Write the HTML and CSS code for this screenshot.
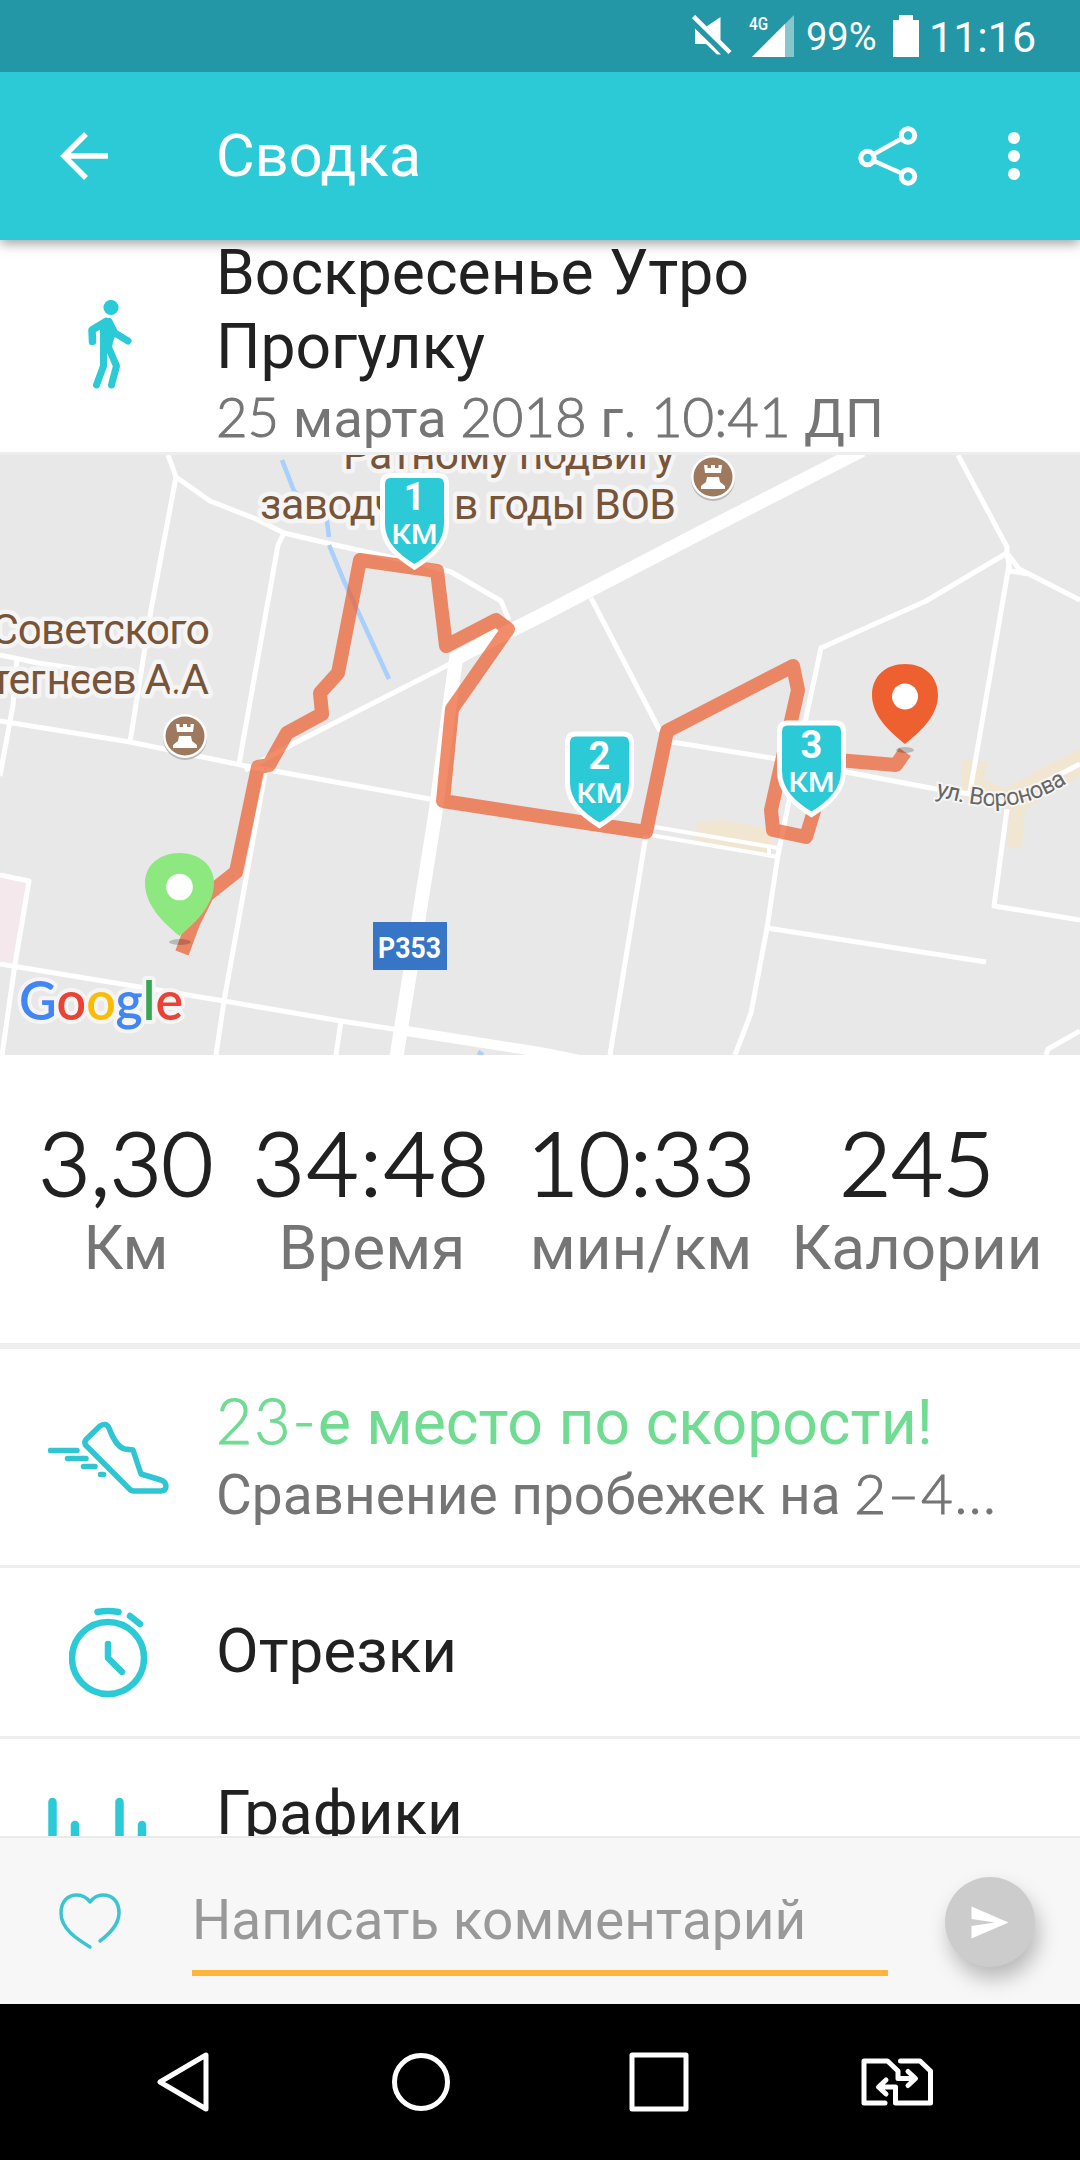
FILE: index.html
```html
<!DOCTYPE html>
<html lang="ru">

<head>
  <meta charset="UTF-8">
  <meta name="viewport" content="width=device-width, initial-scale=1.0">
  <title>Сводка</title>
  <link rel="stylesheet" href="styles.css">
</head>

<body>
  <div class="status-bar">
    <svg class="status-mute" width="40" height="42" viewBox="0 0 40 42">
      <path d="M3 13.500 L21 31 L29 39.500 H25 L14 29 H3 Z M14.500 11.500 L28.500 2 V26 Z" fill="#fff" />
      <path d="M1.500 1.500 L38 37.500" stroke="#fff" stroke-width="4.500" />
    </svg>
    <svg class="status-signal" width="46" height="42" viewBox="0 0 46 42">
      <path d="M45 0 V42 H3 Z" fill="#fff" opacity=".45" />
      <path d="M36 9 V42 H3 Z" fill="#fff" />
      <text x="0" y="15" class="network" textLength="19" lengthAdjust="spacingAndGlyphs">4G</text>
    </svg>
    <span class="status-percent">99%</span>
    <svg class="status-battery" width="26" height="42" viewBox="0 0 26 42">
      <path d="M6 0 H20 V5 H26 V42 H0 V5 H6 Z" fill="#fff" />
    </svg>
    <span class="status-time">11:16</span>
  </div>

  <header class="app-bar">
    <svg class="back" width="50" height="50" viewBox="0 0 50 50" fill="none" stroke="#fff" stroke-width="5.500">
      <path d="M48 25 H5 M26 3 L4 25 L26 47" />
    </svg>
    <h1>Сводка</h1>
    <svg class="share" width="60" height="60" viewBox="0 0 60 60" fill="none" stroke="#fff">
      <path d="M16 28 L43 13 M16 35 L43 47" stroke-width="4.500" />
      <circle cx="9.500" cy="32" r="6.700" stroke-width="5" />
      <circle cx="50" cy="9.500" r="6.700" stroke-width="5" />
      <circle cx="50" cy="50.500" r="6.700" stroke-width="5" />
    </svg>
    <svg class="more" width="12" height="48" viewBox="0 0 12 48" fill="#fff">
      <circle cx="6" cy="6" r="6" />
      <circle cx="6" cy="24" r="6" />
      <circle cx="6" cy="42" r="6" />
    </svg>
  </header>

  <main class="content">
    <section class="activity">
      <div class="icon-cell walker-cell">
        <svg width="48" height="92" viewBox="0 0 48 92" fill="none" stroke="#2ccad7" stroke-linecap="round" stroke-linejoin="round">
          <circle cx="26" cy="7.500" r="7.600" fill="#2ccad7" stroke="none" />
          <path d="M15 22 Q22 15.500 27 20 L31 34 L28 42 L26 54 H15 Z" fill="#2ccad7" stroke="none" />
          <path d="M21 21.500 L7 30 L7.500 41.500" stroke-width="7.500" />
          <path d="M24 21.500 L30 33 L43 41" stroke-width="7" />
          <path d="M18.500 44 V66 L11.500 85 M22 44 L31.500 66 L26.500 85" stroke-width="7" />
        </svg>
      </div>
      <div class="activity-text">
        <h2>Воскресенье Утро<br>Прогулку</h2>
        <p class="date"><span class="num">25</span> марта <span class="num">2018</span> г. <span class="num">10:41</span> ДП</p>
      </div>
    </section>

    <svg class="map" width="1080" height="600" viewBox="0 0 1080 600">
      <rect width="1080" height="600" fill="#e8e8e8" />
      <path d="M0 420 L28 426 L15 509 L0 506 Z" fill="#f4e8ec" />
      <path d="M697 367 L722 365 L771 374 V402 L695 388 Z" fill="#f0e6d2" />
      <path d="M961 304 L987 307 L984 325 L1005 333 L1080 293 V321 L1025 355 L1022 393 L1007 392 L1010 353 L962 343 Z" fill="#f0e6d2" />

      <!-- streets -->
      <g fill="none" stroke="#fff" stroke-width="5" stroke-linejoin="round">
        <path d="M168 0 L176 22 L210 46 L256 64 L284 78 L331 89 L389 102 L430 111 L451 117 L501 146 L509 165" />
        <path d="M176 22 L151 155 L130 287" />
        <path d="M284 78 L278 90 L239 309" />
        <path d="M0 266 L130 287 L241 310 L430 344" />
        <path d="M245 315 L293 289 L454 207" />
        <path d="M265 318 L224 546 L216 600" />
        <path d="M0 200 L38 208 L140 223 M17 203 L13 250 L0 321" />
        <path d="M0 509 L224 546 L341 566 L406 576 M0 420 L29 426 L15 509 L2 600" />
        <path d="M341 566 L336 600" />
        <path d="M958 0 L1007 92 V98 L1019 114 L1029 119 L1080 145 M1007 98 L1010 116 L1029 119" />
        <path d="M1007 98 L926 146 L821 193 L807 258 L778 400 L767 473 L751 558 L735 600" />
        <path d="M1010 104 L970 337" />
        <path d="M591 143 L660 276" />
        <path d="M672 287 L778 304 L846 317 L936 334 L970 339 L1004 348 L1080 309" />
        <path d="M1007 354 L994 451 L1080 465" />
        <path d="M767 473 L986 507" />
        <path d="M646 380 L610 600" />
        <path d="M655 372 L778 393 M650 380 L778 402 M769 392 V400" stroke-width="4" />
        <path d="M1046 600 L1048 594 L1080 576" />
        <path d="M400 575 L540 597 L580 605" stroke-width="10" />
        <path d="M862 -5 L696 80 L540 161 L452 205" stroke-width="14" />
        <path d="M500 178 L456 204 L448 262 L435 361 L396 605" stroke-width="14" />
      </g>
      <path d="M282 5 L294 36 M294 36 L327 66 L329 82 M329 90 L344 126 L389 224 M478 597 L483 600" fill="none" stroke="#a9cffc" stroke-width="4.500" />

      <g class="place">
        <text x="343" y="14" textLength="332">Ратному подвигу</text>
        <text x="260" y="64" textLength="416">заводчан в годы ВОВ</text>
        <text x="-9" y="189" textLength="219">Советского</text>
        <text x="-9" y="239" textLength="218">тегнеев А.А</text>
      </g>
      <path id="voronova" d="M935 341 Q965 349 990 351 Q1030 353 1072 325" fill="none" />
      <text class="street"><textPath href="#voronova" textLength="138">ул. Воронова</textPath></text>

      <g transform="translate(185 281)">
        <circle cy="2" r="22" fill="#b9b9b9" />
        <circle r="22" fill="#fff" />
        <circle r="19.500" fill="#9e795d" />
        <path d="M-9 -12 H-5.500 V-9 H-2 V-12 H2 V-9 H5.500 V-12 H9 L8 -4 H-8 Z M-6 0 H6 L7 5 L12 9 V12 H-12 V9 L-7 5 Z" fill="#fff" />
      </g>
      <g transform="translate(713 22)">
        <circle cy="2" r="22" fill="#b9b9b9" />
        <circle r="22" fill="#fff" />
        <circle r="19.500" fill="#9e795d" />
        <path d="M-9 -12 H-5.500 V-9 H-2 V-12 H2 V-9 H5.500 V-12 H9 L8 -4 H-8 Z M-6 0 H6 L7 5 L12 9 V12 H-12 V9 L-7 5 Z" fill="#fff" />
      </g>

      <!-- walked route -->
      <path class="route" d="M182 498 L193 468 L207 440 L236 417 L258 312 L269 310 L287 278 L322 259 L320 238 L338 218 L360 105 L437 116 L446 191 L496 165 L508 174 L452 254 L443 346 L540 361 L646 377 L667 276 L793 211 L798 235 L771 355 L773 375 L806 382 L814 356 L826 304 L896 310 L905 297" />

      <rect x="373" y="467" width="74" height="48" fill="#3776c6" />
      <text class="road-number" x="378" y="503" textLength="63" lengthAdjust="spacingAndGlyphs">P353</text>

      <!-- start and finish -->
      <ellipse cx="180" cy="487" rx="11" ry="3" fill="#000" opacity=".2" />
      <path d="M179.500 481 C168 471 145 453 145 428 C145 410 160 398 179.500 398 C199 398 214 410 214 428 C214 453 191 471 179.500 481 Z" fill="#8ce87f" />
      <circle cx="179.500" cy="432" r="13.300" fill="#fff" />
      <ellipse cx="905" cy="295" rx="9" ry="3" fill="#000" opacity=".2" />
      <path d="M905 289 C894 280 872 263 872 240 C872 221 886 209 905 209 C924 209 938 221 938 240 C938 263 916 280 905 289 Z" fill="#ee6030" />
      <circle cx="905" cy="241.500" r="13" fill="#fff" />

      <!-- kilometre badges -->
      <g class="km" transform="translate(414.500 23)">
        <path d="M-24 -2.500 H24 Q32 -2.500 32 6 V46 C32 65 18 78 0 89 C-18 78 -32 65 -32 46 V6 Q-32 -2.500 -24 -2.500 Z" />
        <text class="km-value" y="32">1</text>
        <text class="km-unit" y="66" x="-23" textLength="46" lengthAdjust="spacingAndGlyphs">КМ</text>
      </g>
      <g class="km" transform="translate(599.500 281.500)">
        <path d="M-24 -2.500 H24 Q32 -2.500 32 6 V46 C32 65 18 78 0 89 C-18 78 -32 65 -32 46 V6 Q-32 -2.500 -24 -2.500 Z" />
        <text class="km-value" y="32">2</text>
        <text class="km-unit" y="66" x="-23" textLength="46" lengthAdjust="spacingAndGlyphs">КМ</text>
      </g>
      <g class="km" transform="translate(811.500 270.500)">
        <path d="M-24 -2.500 H24 Q32 -2.500 32 6 V46 C32 65 18 78 0 89 C-18 78 -32 65 -32 46 V6 Q-32 -2.500 -24 -2.500 Z" />
        <text class="km-value" y="32">3</text>
        <text class="km-unit" y="66" x="-23" textLength="46" lengthAdjust="spacingAndGlyphs">КМ</text>
      </g>

      <text class="google" x="19" y="565" textLength="164" lengthAdjust="spacingAndGlyphs"><tspan fill="#4285f4">G</tspan><tspan fill="#ea4335">o</tspan><tspan fill="#fbbc05">o</tspan><tspan fill="#4285f4">g</tspan><tspan fill="#34a853">l</tspan><tspan fill="#ea4335">e</tspan></text>
    </svg>

    <section class="stats">
      <div class="stat"><span class="stat-value">3,30</span><span class="stat-label">Км</span></div>
      <div class="stat"><span class="stat-value stat-time">34:48</span><span class="stat-label">Время</span></div>
      <div class="stat"><span class="stat-value">10:33</span><span class="stat-label">мин/км</span></div>
      <div class="stat"><span class="stat-value">245</span><span class="stat-label">Калории</span></div>
    </section>

    <section class="row row-rank">
      <div class="icon-cell">
        <svg width="122" height="76" viewBox="0 0 122 76" fill="none" stroke="#2fc6d4" stroke-width="5.500" stroke-linecap="round" stroke-linejoin="round">
          <path d="M37.500 26 Q36 23 38 20.500 L52 7 Q58 3 61 9 C65 20 71 29 77 30 L85 31 L93 55 L113 61 Q118 63 118 67 Q118 72 113 72 H86 Q83 72 81 69.500 Z" />
          <path d="M2.500 31.500 H29 M19.500 39.500 H38 M35.500 47.500 H47 M52.500 55.500 H55.500" />
        </svg>
      </div>
      <div class="row-text">
        <p class="rank"><span class="num">23-</span>е место по скорости!</p>
        <p class="rank-note">Сравнение пробежек на <span class="num">2–4...</span></p>
      </div>
    </section>

    <section class="row row-laps">
      <div class="icon-cell">
        <svg width="78" height="92" viewBox="0 0 78 92" fill="none" stroke="#2ccad7" stroke-width="6.500" stroke-linecap="round">
          <circle cx="39" cy="52" r="36" />
          <path d="M39 38 V52 L53 66" stroke-linejoin="round" />
          <path d="M28.500 6 Q39 4 49.500 6 M61 10 L71 18" />
        </svg>
      </div>
      <p>Отрезки</p>
    </section>

    <section class="row row-charts">
      <div class="icon-cell">
        <svg width="120" height="92" viewBox="0 0 120 92" fill="none" stroke="#2ccad7" stroke-width="8.500" stroke-linecap="round">
          <path d="M4.500 5 V88 M27 28 V88 M71.500 5 V88 M94 28 V88" />
        </svg>
      </div>
      <p>Графики</p>
    </section>
  </main>

  <form class="comment-bar">
    <svg class="heart" width="62" height="58" viewBox="0 0 62 58" fill="none" stroke="#3cc5d1" stroke-width="3.500" stroke-linecap="round" stroke-linejoin="round">
      <path d="M31 55 C18 47 2 37 2 21 C2 9 9 3 18 3 C24 3 28 6 31 10 C34 6 38 3 44 3 C53 3 60 9 60 21 C60 33 50 42 41 49" />
    </svg>
    <input type="text" name="comment" placeholder="Написать комментарий">
    <button type="button" class="send" aria-label="Отправить">
      <svg width="38" height="33" viewBox="0 0 38 33">
        <path d="M0.500 0.500 L37.500 16.500 L0.500 32.500 V20 L24 16.500 L0.500 13 Z" fill="#fff" />
      </svg>
    </button>
  </form>

  <nav class="nav-bar">
    <svg width="52" height="60" viewBox="0 0 52 60"><path d="M3 30 L49 3 V57 Z" /></svg>
    <svg width="60" height="60" viewBox="0 0 60 60"><circle cx="30" cy="30" r="26.500" /></svg>
    <svg width="60" height="60" viewBox="0 0 60 60"><rect x="3" y="3" width="54" height="54" /></svg>
    <svg width="72" height="48" viewBox="0 0 72 48">
      <path d="M24 45 H3 V3 H26.500 L37 13 V20.500 H53 M47 13.500 L54.500 20.500 L47 27.500 M39.500 3 H59 L69.500 13 V45 H34.500 V29 H18 M25 22 L17.500 29 L25 36" />
    </svg>
  </nav>
</body>

</html>
```
FILE: styles.css
```css
* {
  box-sizing: border-box;
}

body {
  margin: 0;
  width: 1080px;
  height: 2160px;
  display: flex;
  flex-direction: column;
  overflow: hidden;
  background-color: #fff;
  color: #212121;
  font-family: Roboto, sans-serif;
}

h1,
h2,
p {
  margin: 0;
  font-weight: 400;
}

svg {
  display: block;
  flex: none;
}

.num {
  font-family: Lato, sans-serif;
  font-weight: 300;
  -webkit-text-stroke: 1px currentColor;
}

.status-bar {
  display: flex;
  align-items: center;
  flex: none;
  height: 72px;
  padding-left: 692px;
  background-color: #2397a5;
  color: #fff;
  z-index: 2;
}

.status-signal {
  margin-left: 17px;
}

.network {
  font-size: 18px;
  font-weight: 500;
  fill: #fff;
}

.status-percent {
  width: 87px;
  margin-left: 11px;
  padding-top: 2px;
  font-size: 38px;
}

.status-time {
  margin-left: 10px;
  padding-top: 2px;
  font-size: 43px;
}

.app-bar {
  display: flex;
  align-items: center;
  flex: none;
  height: 168px;
  padding: 0 60px;
  background-color: #2ccad7;
  color: #fff;
  box-shadow: 0 3px 12px rgba(0, 0, 0, 0.4);
  z-index: 1;
}

.app-bar h1 {
  flex: 1;
  margin-left: 106px;
  font-size: 59.5px;
  line-height: 68px;
}

.more {
  margin-left: 90px;
}

.content {
  flex: none;
  height: 1596px;
  overflow: hidden;
}

.activity {
  display: flex;
  height: 215px;
  border-bottom: 3px solid #eee;
}

.icon-cell {
  display: flex;
  align-items: center;
  flex: none;
  width: 216px;
  padding-left: 48px;
}

.walker-cell {
  padding-left: 85px;
}

.activity h2 {
  margin-top: -4px;
  font-size: 62.4px;
  line-height: 74px;
}

.date {
  color: #757575;
  font-size: 54.5px;
  line-height: 65px;
}

.place text {
  font-size: 43px;
  fill: #785439;
  stroke: #f5f5f5;
  stroke-width: 9px;
  stroke-linejoin: round;
  paint-order: stroke;
}

.street {
  font-size: 24px;
  fill: #666;
  stroke: #f5f5f5;
  stroke-width: 4px;
  paint-order: stroke;
}

.road-number {
  font-size: 29px;
  font-weight: 700;
  fill: #fff;
}

.route {
  fill: none;
  stroke: #ec5c2e;
  stroke-width: 14px;
  stroke-linejoin: round;
  opacity: 0.7;
}

.km path {
  fill: #2ccad7;
  stroke: #fff;
  stroke-width: 5px;
}

.km text {
  fill: #fff;
}

.km-value {
  font-size: 38px;
  font-weight: 700;
  text-anchor: middle;
}

.km-unit {
  font-size: 28px;
  font-weight: 500;
}

.google {
  font-family: Lato, sans-serif;
  font-size: 54px;
  font-weight: 600;
  stroke: #f5f5f5;
  stroke-width: 8px;
  stroke-linejoin: round;
  paint-order: stroke;
}

.stats {
  display: grid;
  grid-template-columns: 252px 240px 298px 254px;
  height: 294px;
  padding-top: 60px;
  border-bottom: 6px solid #eee;
}

.stat {
  display: flex;
  flex-direction: column;
  align-items: center;
}

.stat-value {
  font-family: Lato, sans-serif;
  font-size: 89px;
  font-weight: 300;
  line-height: 94px;
  -webkit-text-stroke: 2px currentColor;
}

.stat-time {
  letter-spacing: 2px;
}

.stat-label {
  margin-top: 3px;
  color: #757575;
  font-size: 62px;
  line-height: 72px;
}

.row {
  display: flex;
  align-items: center;
  font-size: 62px;
  border-bottom: 3px solid #eee;
}

.row-rank {
  height: 219px;
}

.row-laps {
  height: 171px;
}

.row-laps .icon-cell {
  padding-left: 69px;
}

.row-laps p {
  margin-top: -3px;
}

.row-charts {
  height: 150px;
}

.row-charts .icon-cell {
  padding-top: 60px;
}

.rank {
  margin-top: -3px;
  color: #6fdc92;
  font-size: 62.5px;
  line-height: 74px;
}

.rank .num {
  letter-spacing: 2px;
}

.rank-note {
  color: #757575;
  font-size: 55px;
  line-height: 66px;
}

.rank-note .num {
  letter-spacing: 1.5px;
}

.comment-bar {
  display: flex;
  align-items: center;
  flex: none;
  height: 168px;
  padding-left: 59px;
  background-color: #f7f7f7;
  border-top: 2px solid #eaeaea;
}

.comment-bar input {
  width: 696px;
  height: 108px;
  margin: 2px 57px 0 71px;
  padding: 2px 0 0;
  border: none;
  border-bottom: 6px solid #fdb53a;
  background: none;
  font-family: Roboto, sans-serif;
  font-size: 55px;
}

.comment-bar input::placeholder {
  color: #999;
}

.send {
  display: flex;
  align-items: center;
  justify-content: center;
  width: 90px;
  height: 90px;
  margin-top: 2px;
  padding: 0;
  border: none;
  border-radius: 50%;
  background-color: #ccc;
  box-shadow: 4px 12px 20px rgba(0, 0, 0, 0.25);
}

.nav-bar {
  display: grid;
  grid-template-columns: 234px 238px 232px 72px;
  align-items: center;
  flex: none;
  height: 156px;
  padding-left: 157px;
  background-color: #000;
}

.nav-bar svg {
  fill: none;
  stroke: #fff;
  stroke-width: 5px;
  stroke-linecap: round;
  stroke-linejoin: round;
}
```
